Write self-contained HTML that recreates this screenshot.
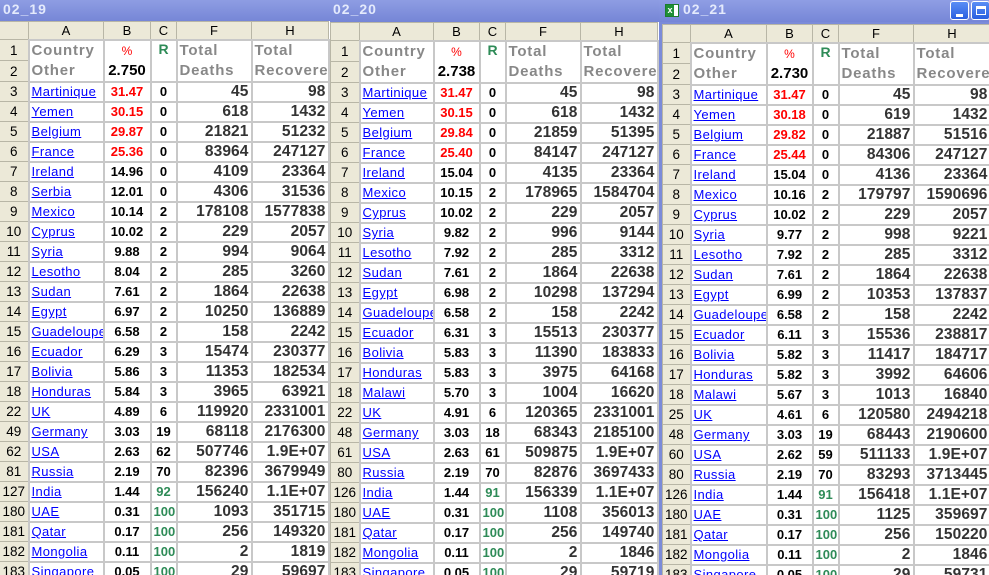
<!DOCTYPE html>
<html><head><meta charset="utf-8"><style>
*{margin:0;padding:0;box-sizing:border-box}
body{width:989px;height:575px;overflow:hidden;background:#7b8bd9;font-family:"Liberation Sans",Arial,sans-serif;position:relative}
.win{position:absolute;top:0;height:575px;background:#7b8bd9;overflow:hidden}
.title{position:absolute;left:0;right:0;top:0;height:22px;background:linear-gradient(#8e9de3,#7585d6);color:#e4eafc;font-weight:bold;font-size:14px;line-height:19px;padding-left:3px;letter-spacing:1px}
table{position:absolute;border-collapse:collapse;table-layout:fixed;background:#fff}
td{border:2px solid #c8c8c8;height:20px;white-space:nowrap;overflow:hidden;padding:0 2px;font-size:12px}
tr.h td{height:18px;background:#ece9d8;text-align:center;font-size:13px;border:1px solid #b8b6a6;font-weight:normal;color:#000}
td.r{background:#ece9d8;border:1px solid #b8b6a6;text-align:center;font-size:13.5px;padding:0}
td.a a{color:#0000ff;text-decoration:underline;font-size:13px;letter-spacing:0.4px}
td.b{text-align:center;font-weight:bold;font-size:13px}
td.red{color:#f00}
td.c{text-align:center;font-weight:bold;font-size:13px}
td.g{color:#2e8b57}
td.n{text-align:right;font-weight:bold;font-size:15.5px;color:#333;letter-spacing:0.1px}
td.hd{color:#888;font-weight:bold;font-size:15px;letter-spacing:0.8px;vertical-align:top;line-height:20px;padding-top:0}
td.pb{text-align:center;font-weight:bold;vertical-align:top;line-height:20px}
</style></head><body>

<div class="win" style="left:0;width:330px">
<div class="title">02_19</div>
<table style="left:-1px;top:21px;width:329px">
<colgroup><col style="width:29px"><col style="width:75px"><col style="width:47px"><col style="width:26px"><col style="width:75px"><col style="width:77px"></colgroup>
<tr class="h"><td></td><td>A</td><td>B</td><td>C</td><td>F</td><td>H</td></tr>
<tr><td class="r">1</td><td class="hd" rowspan="2">Country<br>Other</td><td class="pb" rowspan="2"><span style="color:#f00;font-size:12px;font-weight:normal">%</span><br><span style="font-size:15px">2.750</span></td><td class="c g" rowspan="2" style="vertical-align:top;font-size:14px">R</td><td class="hd" rowspan="2">Total<br>Deaths</td><td class="hd" rowspan="2">Total<br>Recovere</td></tr>
<tr><td class="r">2</td></tr>
<tr><td class="r">3</td><td class="a"><a>Martinique</a></td><td class="b red">31.47</td><td class="c">0</td><td class="n">45</td><td class="n">98</td></tr>
<tr><td class="r">4</td><td class="a"><a>Yemen</a></td><td class="b red">30.15</td><td class="c">0</td><td class="n">618</td><td class="n">1432</td></tr>
<tr><td class="r">5</td><td class="a"><a>Belgium</a></td><td class="b red">29.87</td><td class="c">0</td><td class="n">21821</td><td class="n">51232</td></tr>
<tr><td class="r">6</td><td class="a"><a>France</a></td><td class="b red">25.36</td><td class="c">0</td><td class="n">83964</td><td class="n">247127</td></tr>
<tr><td class="r">7</td><td class="a"><a>Ireland</a></td><td class="b">14.96</td><td class="c">0</td><td class="n">4109</td><td class="n">23364</td></tr>
<tr><td class="r">8</td><td class="a"><a>Serbia</a></td><td class="b">12.01</td><td class="c">0</td><td class="n">4306</td><td class="n">31536</td></tr>
<tr><td class="r">9</td><td class="a"><a>Mexico</a></td><td class="b">10.14</td><td class="c">2</td><td class="n">178108</td><td class="n">1577838</td></tr>
<tr><td class="r">10</td><td class="a"><a>Cyprus</a></td><td class="b">10.02</td><td class="c">2</td><td class="n">229</td><td class="n">2057</td></tr>
<tr><td class="r">11</td><td class="a"><a>Syria</a></td><td class="b">9.88</td><td class="c">2</td><td class="n">994</td><td class="n">9064</td></tr>
<tr><td class="r">12</td><td class="a"><a>Lesotho</a></td><td class="b">8.04</td><td class="c">2</td><td class="n">285</td><td class="n">3260</td></tr>
<tr><td class="r">13</td><td class="a"><a>Sudan</a></td><td class="b">7.61</td><td class="c">2</td><td class="n">1864</td><td class="n">22638</td></tr>
<tr><td class="r">14</td><td class="a"><a>Egypt</a></td><td class="b">6.97</td><td class="c">2</td><td class="n">10250</td><td class="n">136889</td></tr>
<tr><td class="r">15</td><td class="a"><a>Guadeloupe</a></td><td class="b">6.58</td><td class="c">2</td><td class="n">158</td><td class="n">2242</td></tr>
<tr><td class="r">16</td><td class="a"><a>Ecuador</a></td><td class="b">6.29</td><td class="c">3</td><td class="n">15474</td><td class="n">230377</td></tr>
<tr><td class="r">17</td><td class="a"><a>Bolivia</a></td><td class="b">5.86</td><td class="c">3</td><td class="n">11353</td><td class="n">182534</td></tr>
<tr><td class="r">18</td><td class="a"><a>Honduras</a></td><td class="b">5.84</td><td class="c">3</td><td class="n">3965</td><td class="n">63921</td></tr>
<tr><td class="r">22</td><td class="a"><a>UK</a></td><td class="b">4.89</td><td class="c">6</td><td class="n">119920</td><td class="n">2331001</td></tr>
<tr><td class="r">49</td><td class="a"><a>Germany</a></td><td class="b">3.03</td><td class="c">19</td><td class="n">68118</td><td class="n">2176300</td></tr>
<tr><td class="r">62</td><td class="a"><a>USA</a></td><td class="b">2.63</td><td class="c">62</td><td class="n">507746</td><td class="n">1.9E+07</td></tr>
<tr><td class="r">81</td><td class="a"><a>Russia</a></td><td class="b">2.19</td><td class="c">70</td><td class="n">82396</td><td class="n">3679949</td></tr>
<tr><td class="r">127</td><td class="a"><a>India</a></td><td class="b">1.44</td><td class="c g">92</td><td class="n">156240</td><td class="n">1.1E+07</td></tr>
<tr><td class="r">180</td><td class="a"><a>UAE</a></td><td class="b">0.31</td><td class="c g">100</td><td class="n">1093</td><td class="n">351715</td></tr>
<tr><td class="r">181</td><td class="a"><a>Qatar</a></td><td class="b">0.17</td><td class="c g">100</td><td class="n">256</td><td class="n">149320</td></tr>
<tr><td class="r">182</td><td class="a"><a>Mongolia</a></td><td class="b">0.11</td><td class="c g">100</td><td class="n">2</td><td class="n">1819</td></tr>
<tr><td class="r">183</td><td class="a"><a>Singapore</a></td><td class="b">0.05</td><td class="c g">100</td><td class="n">29</td><td class="n">59697</td></tr>
</table>
</div>

<div class="win" style="left:330px;width:329px">
<div class="title">02_20</div>
<table style="left:0;top:22px;width:327px">
<colgroup><col style="width:29px"><col style="width:74px"><col style="width:46px"><col style="width:26px"><col style="width:75px"><col style="width:77px"></colgroup>
<tr class="h"><td></td><td>A</td><td>B</td><td>C</td><td>F</td><td>H</td></tr>
<tr><td class="r">1</td><td class="hd" rowspan="2">Country<br>Other</td><td class="pb" rowspan="2"><span style="color:#f00;font-size:12px;font-weight:normal">%</span><br><span style="font-size:15px">2.738</span></td><td class="c g" rowspan="2" style="vertical-align:top;font-size:14px">R</td><td class="hd" rowspan="2">Total<br>Deaths</td><td class="hd" rowspan="2">Total<br>Recovere</td></tr>
<tr><td class="r">2</td></tr>
<tr><td class="r">3</td><td class="a"><a>Martinique</a></td><td class="b red">31.47</td><td class="c">0</td><td class="n">45</td><td class="n">98</td></tr>
<tr><td class="r">4</td><td class="a"><a>Yemen</a></td><td class="b red">30.15</td><td class="c">0</td><td class="n">618</td><td class="n">1432</td></tr>
<tr><td class="r">5</td><td class="a"><a>Belgium</a></td><td class="b red">29.84</td><td class="c">0</td><td class="n">21859</td><td class="n">51395</td></tr>
<tr><td class="r">6</td><td class="a"><a>France</a></td><td class="b red">25.40</td><td class="c">0</td><td class="n">84147</td><td class="n">247127</td></tr>
<tr><td class="r">7</td><td class="a"><a>Ireland</a></td><td class="b">15.04</td><td class="c">0</td><td class="n">4135</td><td class="n">23364</td></tr>
<tr><td class="r">8</td><td class="a"><a>Mexico</a></td><td class="b">10.15</td><td class="c">2</td><td class="n">178965</td><td class="n">1584704</td></tr>
<tr><td class="r">9</td><td class="a"><a>Cyprus</a></td><td class="b">10.02</td><td class="c">2</td><td class="n">229</td><td class="n">2057</td></tr>
<tr><td class="r">10</td><td class="a"><a>Syria</a></td><td class="b">9.82</td><td class="c">2</td><td class="n">996</td><td class="n">9144</td></tr>
<tr><td class="r">11</td><td class="a"><a>Lesotho</a></td><td class="b">7.92</td><td class="c">2</td><td class="n">285</td><td class="n">3312</td></tr>
<tr><td class="r">12</td><td class="a"><a>Sudan</a></td><td class="b">7.61</td><td class="c">2</td><td class="n">1864</td><td class="n">22638</td></tr>
<tr><td class="r">13</td><td class="a"><a>Egypt</a></td><td class="b">6.98</td><td class="c">2</td><td class="n">10298</td><td class="n">137294</td></tr>
<tr><td class="r">14</td><td class="a"><a>Guadeloupe</a></td><td class="b">6.58</td><td class="c">2</td><td class="n">158</td><td class="n">2242</td></tr>
<tr><td class="r">15</td><td class="a"><a>Ecuador</a></td><td class="b">6.31</td><td class="c">3</td><td class="n">15513</td><td class="n">230377</td></tr>
<tr><td class="r">16</td><td class="a"><a>Bolivia</a></td><td class="b">5.83</td><td class="c">3</td><td class="n">11390</td><td class="n">183833</td></tr>
<tr><td class="r">17</td><td class="a"><a>Honduras</a></td><td class="b">5.83</td><td class="c">3</td><td class="n">3975</td><td class="n">64168</td></tr>
<tr><td class="r">18</td><td class="a"><a>Malawi</a></td><td class="b">5.70</td><td class="c">3</td><td class="n">1004</td><td class="n">16620</td></tr>
<tr><td class="r">22</td><td class="a"><a>UK</a></td><td class="b">4.91</td><td class="c">6</td><td class="n">120365</td><td class="n">2331001</td></tr>
<tr><td class="r">48</td><td class="a"><a>Germany</a></td><td class="b">3.03</td><td class="c">18</td><td class="n">68343</td><td class="n">2185100</td></tr>
<tr><td class="r">61</td><td class="a"><a>USA</a></td><td class="b">2.63</td><td class="c">61</td><td class="n">509875</td><td class="n">1.9E+07</td></tr>
<tr><td class="r">80</td><td class="a"><a>Russia</a></td><td class="b">2.19</td><td class="c">70</td><td class="n">82876</td><td class="n">3697433</td></tr>
<tr><td class="r">126</td><td class="a"><a>India</a></td><td class="b">1.44</td><td class="c g">91</td><td class="n">156339</td><td class="n">1.1E+07</td></tr>
<tr><td class="r">180</td><td class="a"><a>UAE</a></td><td class="b">0.31</td><td class="c g">100</td><td class="n">1108</td><td class="n">356013</td></tr>
<tr><td class="r">181</td><td class="a"><a>Qatar</a></td><td class="b">0.17</td><td class="c g">100</td><td class="n">256</td><td class="n">149740</td></tr>
<tr><td class="r">182</td><td class="a"><a>Mongolia</a></td><td class="b">0.11</td><td class="c g">100</td><td class="n">2</td><td class="n">1846</td></tr>
<tr><td class="r">183</td><td class="a"><a>Singapore</a></td><td class="b">0.05</td><td class="c g">100</td><td class="n">29</td><td class="n">59719</td></tr>
</table>
</div>

<div class="win" style="left:659px;width:330px">
<div class="title" style="padding-left:24px;background:linear-gradient(#8f9ee4,#7686d7)">02_21
<div style="position:absolute;left:6px;top:4px;width:14px;height:13px;background:#fff;border:1px solid #1c7c2c"><div style="position:absolute;left:0;top:0;width:8px;height:11px;background:#1f8f36;color:#fff;font-size:9px;line-height:11px;text-align:center;letter-spacing:0">x</div></div>
<div style="position:absolute;left:291px;top:1px;width:19px;height:19px;border:1px solid #fff;border-radius:3px;background:linear-gradient(#5a8ef5,#2a5fe0)"><div style="position:absolute;left:5px;top:12px;width:7px;height:3px;background:#fff"></div></div>
<div style="position:absolute;left:312px;top:1px;width:19px;height:19px;border:1px solid #fff;border-radius:3px;background:linear-gradient(#5a8ef5,#2a5fe0)"><div style="position:absolute;left:4px;top:4px;width:10px;height:9px;border:1px solid #fff;border-top-width:3px"></div></div>
</div>
<table style="left:3px;top:24px;width:328px">
<colgroup><col style="width:28px"><col style="width:76px"><col style="width:46px"><col style="width:26px"><col style="width:75px"><col style="width:77px"></colgroup>
<tr class="h"><td></td><td>A</td><td>B</td><td>C</td><td>F</td><td>H</td></tr>
<tr><td class="r">1</td><td class="hd" rowspan="2">Country<br>Other</td><td class="pb" rowspan="2"><span style="color:#f00;font-size:12px;font-weight:normal">%</span><br><span style="font-size:15px">2.730</span></td><td class="c g" rowspan="2" style="vertical-align:top;font-size:14px">R</td><td class="hd" rowspan="2">Total<br>Deaths</td><td class="hd" rowspan="2">Total<br>Recovere</td></tr>
<tr><td class="r">2</td></tr>
<tr><td class="r">3</td><td class="a"><a>Martinique</a></td><td class="b red">31.47</td><td class="c">0</td><td class="n">45</td><td class="n">98</td></tr>
<tr><td class="r">4</td><td class="a"><a>Yemen</a></td><td class="b red">30.18</td><td class="c">0</td><td class="n">619</td><td class="n">1432</td></tr>
<tr><td class="r">5</td><td class="a"><a>Belgium</a></td><td class="b red">29.82</td><td class="c">0</td><td class="n">21887</td><td class="n">51516</td></tr>
<tr><td class="r">6</td><td class="a"><a>France</a></td><td class="b red">25.44</td><td class="c">0</td><td class="n">84306</td><td class="n">247127</td></tr>
<tr><td class="r">7</td><td class="a"><a>Ireland</a></td><td class="b">15.04</td><td class="c">0</td><td class="n">4136</td><td class="n">23364</td></tr>
<tr><td class="r">8</td><td class="a"><a>Mexico</a></td><td class="b">10.16</td><td class="c">2</td><td class="n">179797</td><td class="n">1590696</td></tr>
<tr><td class="r">9</td><td class="a"><a>Cyprus</a></td><td class="b">10.02</td><td class="c">2</td><td class="n">229</td><td class="n">2057</td></tr>
<tr><td class="r">10</td><td class="a"><a>Syria</a></td><td class="b">9.77</td><td class="c">2</td><td class="n">998</td><td class="n">9221</td></tr>
<tr><td class="r">11</td><td class="a"><a>Lesotho</a></td><td class="b">7.92</td><td class="c">2</td><td class="n">285</td><td class="n">3312</td></tr>
<tr><td class="r">12</td><td class="a"><a>Sudan</a></td><td class="b">7.61</td><td class="c">2</td><td class="n">1864</td><td class="n">22638</td></tr>
<tr><td class="r">13</td><td class="a"><a>Egypt</a></td><td class="b">6.99</td><td class="c">2</td><td class="n">10353</td><td class="n">137837</td></tr>
<tr><td class="r">14</td><td class="a"><a>Guadeloupe</a></td><td class="b">6.58</td><td class="c">2</td><td class="n">158</td><td class="n">2242</td></tr>
<tr><td class="r">15</td><td class="a"><a>Ecuador</a></td><td class="b">6.11</td><td class="c">3</td><td class="n">15536</td><td class="n">238817</td></tr>
<tr><td class="r">16</td><td class="a"><a>Bolivia</a></td><td class="b">5.82</td><td class="c">3</td><td class="n">11417</td><td class="n">184717</td></tr>
<tr><td class="r">17</td><td class="a"><a>Honduras</a></td><td class="b">5.82</td><td class="c">3</td><td class="n">3992</td><td class="n">64606</td></tr>
<tr><td class="r">18</td><td class="a"><a>Malawi</a></td><td class="b">5.67</td><td class="c">3</td><td class="n">1013</td><td class="n">16840</td></tr>
<tr><td class="r">25</td><td class="a"><a>UK</a></td><td class="b">4.61</td><td class="c">6</td><td class="n">120580</td><td class="n">2494218</td></tr>
<tr><td class="r">48</td><td class="a"><a>Germany</a></td><td class="b">3.03</td><td class="c">19</td><td class="n">68443</td><td class="n">2190600</td></tr>
<tr><td class="r">60</td><td class="a"><a>USA</a></td><td class="b">2.62</td><td class="c">59</td><td class="n">511133</td><td class="n">1.9E+07</td></tr>
<tr><td class="r">80</td><td class="a"><a>Russia</a></td><td class="b">2.19</td><td class="c">70</td><td class="n">83293</td><td class="n">3713445</td></tr>
<tr><td class="r">126</td><td class="a"><a>India</a></td><td class="b">1.44</td><td class="c g">91</td><td class="n">156418</td><td class="n">1.1E+07</td></tr>
<tr><td class="r">180</td><td class="a"><a>UAE</a></td><td class="b">0.31</td><td class="c g">100</td><td class="n">1125</td><td class="n">359697</td></tr>
<tr><td class="r">181</td><td class="a"><a>Qatar</a></td><td class="b">0.17</td><td class="c g">100</td><td class="n">256</td><td class="n">150220</td></tr>
<tr><td class="r">182</td><td class="a"><a>Mongolia</a></td><td class="b">0.11</td><td class="c g">100</td><td class="n">2</td><td class="n">1846</td></tr>
<tr><td class="r">183</td><td class="a"><a>Singapore</a></td><td class="b">0.05</td><td class="c g">100</td><td class="n">29</td><td class="n">59731</td></tr>
</table>
</div>
</body></html>
